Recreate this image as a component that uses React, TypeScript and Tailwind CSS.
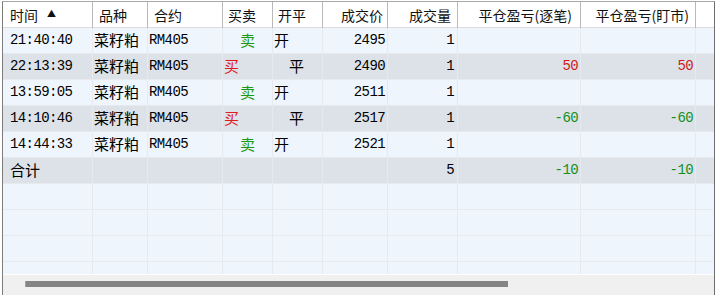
import React from 'react';

const cols = 'grid grid-cols-[90px_55px_75px_50px_50px_65px_70px_123px_115px_17px]';
const mono = "font-['Liberation_Mono',monospace] text-[14px] tracking-[-0.6px]";
const cjk = "font-['Noto_Sans_CJK_SC','Noto_Sans',sans-serif] text-[15px]";

type Row = {
  time: string;
  side: 'buy' | 'sell' | '';
  open: 'open' | 'close' | '';
  price: string;
  qty: string;
  pnl: string;
};

const rows: Row[] = [
  { time: '21:40:40', side: 'sell', open: 'open', price: '2495', qty: '1', pnl: '' },
  { time: '22:13:39', side: 'buy', open: 'close', price: '2490', qty: '1', pnl: '50' },
  { time: '13:59:05', side: 'sell', open: 'open', price: '2511', qty: '1', pnl: '' },
  { time: '14:10:46', side: 'buy', open: 'close', price: '2517', qty: '1', pnl: '-60' },
  { time: '14:44:33', side: 'sell', open: 'open', price: '2521', qty: '1', pnl: '' },
];

const pnlColor = (v: string) => (v.startsWith('-') ? 'text-[#12901a]' : 'text-[#d01a1a]');

const Cell = ({ className = '', children }: { className?: string; children?: React.ReactNode }) => (
  <div className={`h-[26px] border-r border-b border-[#e6eaef] flex items-center overflow-hidden whitespace-nowrap ${className}`}>
    {children}
  </div>
);

const Head = ({ className = '', children, last }: { className?: string; children?: React.ReactNode; last?: boolean }) => (
  <div
    className={`h-[26px] flex items-center whitespace-nowrap text-[14px] text-[#111] font-['Noto_Sans_CJK_SC','Noto_Sans',sans-serif] ${last ? '' : 'border-r border-[#b9b9b9]'} ${className}`}
  >
    {children}
  </div>
);

export default function App() {
  return (
    <div className="w-[715px] h-[295px] bg-white overflow-hidden">
      <div className="ml-[2px] mt-[1px] w-[713px] h-[294px] border-t border-l border-r border-t-[#a8a8a8] border-l-[#7c7c7c] border-r-[#6e6e6e] bg-white flex flex-col">
        {/* Header */}
        <div className={`${cols} bg-white border-b border-[#dcdcdc] h-[26px] shrink-0`}>
          <Head className="pl-[7px] gap-[9px]">
            时间 <span className="text-[9px] leading-none -mt-[3px]">▲</span>
          </Head>
          <Head className="pl-[6px]">品种</Head>
          <Head className="pl-[6px]">合约</Head>
          <Head className="pl-[5px]">买卖</Head>
          <Head className="pl-[5px]">开平</Head>
          <Head className="justify-end pr-[4px]">成交价</Head>
          <Head className="justify-end pr-[6px]">成交量</Head>
          <Head className="justify-end pr-[8px]">平仓盈亏(逐笔)</Head>
          <Head className="justify-end pr-[6px]">平仓盈亏(盯市)</Head>
          <Head last />
        </div>

        {/* Body */}
        <div className="h-[246px] overflow-hidden shrink-0">
          {rows.map((r, i) => (
            <div key={i} className={`${cols} ${i % 2 === 1 ? 'bg-[#dde2e9]' : 'bg-[#eff5fd]'}`}>
              <Cell className={`pl-[7px] ${mono}`}>{r.time}</Cell>
              <Cell className={`pl-[1px] ${cjk}`}>菜籽粕</Cell>
              <Cell className={`pl-[1px] ${mono}`}>RM405</Cell>
              <Cell className={cjk}>
                {r.side === 'sell' ? (
                  <span className="pl-[17px] text-[#179a17]">卖</span>
                ) : (
                  <span className="pl-[1px] text-[#e0191e]">买</span>
                )}
              </Cell>
              <Cell className={cjk}>
                {r.open === 'open' ? <span className="pl-[1px]">开</span> : <span className="pl-[16px]">平</span>}
              </Cell>
              <Cell className={`justify-end pr-[2px] ${mono}`}>{r.price}</Cell>
              <Cell className={`justify-end pr-[3px] ${mono}`}>{r.qty}</Cell>
              <Cell className={`justify-end pr-[2px] ${mono} ${pnlColor(r.pnl)}`}>{r.pnl}</Cell>
              <Cell className={`justify-end pr-[2px] ${mono} ${pnlColor(r.pnl)}`}>{r.pnl}</Cell>
              <Cell className="border-r-0" />
            </div>
          ))}
          {/* Total row */}
          <div className={`${cols} bg-[#dde2e9]`}>
            <Cell className={`pl-[7px] ${cjk}`}>合计</Cell>
            <Cell />
            <Cell />
            <Cell />
            <Cell />
            <Cell />
            <Cell className={`justify-end pr-[3px] ${mono}`}>5</Cell>
            <Cell className={`justify-end pr-[2px] ${mono} text-[#12901a]`}>-10</Cell>
            <Cell className={`justify-end pr-[2px] ${mono} text-[#12901a]`}>-10</Cell>
            <Cell className="border-r-0" />
          </div>
          {/* Empty rows */}
          {[0, 1, 2, 3].map((k) => (
            <div key={k} className={`${cols} bg-[#eff5fd]`}>
              {Array.from({ length: 10 }).map((_, j) => (
                <Cell key={j} className={j === 9 ? 'border-r-0' : ''} />
              ))}
            </div>
          ))}
        </div>

        {/* Horizontal scrollbar */}
        <div className="h-[21px] shrink-0 bg-[#f0f0f0] border-t border-white pl-[22px] pt-[6px]">
          <div className="w-[483px] h-[6px] bg-[#858585] border-l border-[#a0a0a0]" />
        </div>
      </div>
    </div>
  );
}
